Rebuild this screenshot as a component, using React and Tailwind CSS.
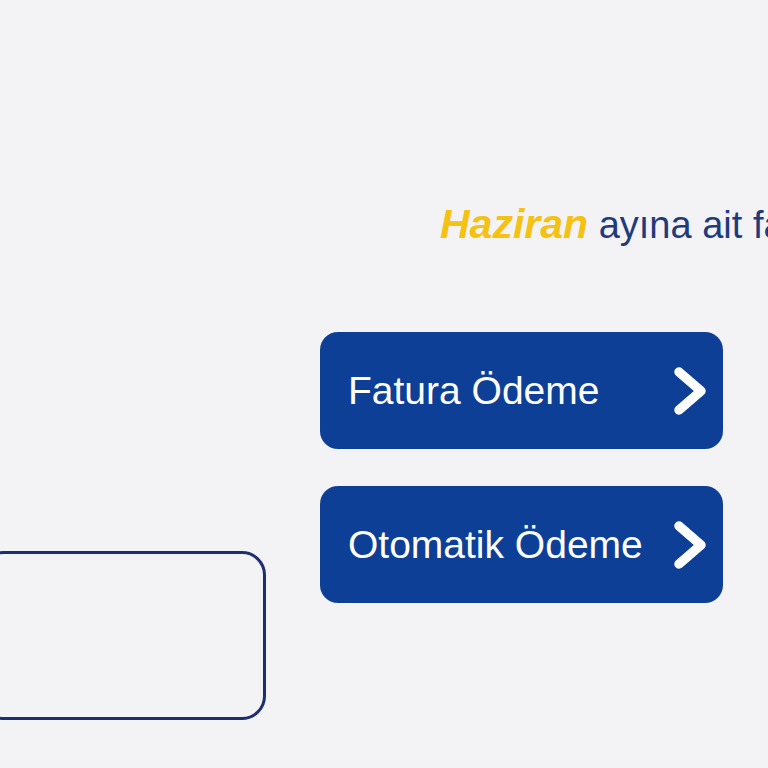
import React from "react";

const Chevron = () => (
  <svg width="44" height="52" viewBox="0 0 44 52" fill="none">
    <polyline
      points="12,7 34,26 12,45"
      stroke="white"
      strokeWidth="9.5"
      strokeLinecap="round"
      strokeLinejoin="round"
    />
  </svg>
);

const PayButton = ({ label }) => (
  <button className="w-[403px] h-[117px] rounded-[18px] bg-[#0e3f96] flex items-center justify-between pl-[28px] pr-[12px] text-white text-[39px] leading-none">
    <span>{label}</span>
    <Chevron />
  </button>
);

export default function App() {
  return (
    <div
      className="w-[768px] h-[768px] overflow-hidden bg-[#f3f3f5]"
      style={{ fontFamily: '"Liberation Sans", Arial, sans-serif' }}
    >
      <div className="pt-[204px] pl-[440px] whitespace-nowrap text-[38px] leading-[42px] text-[#1f3b7c]">
        <span className="font-bold italic text-[41px] leading-none text-[#f5c112]">Haziran</span> ayına ait faturanız
      </div>
      <div className="flex items-start mt-[86px]">
        <div className="-ml-[20px] w-[286px] h-[169px] mt-[219px] rounded-[24px] border-[3px] border-[#1d2f70] shrink-0" />
        <div className="ml-[54px] flex flex-col gap-[37px] shrink-0">
          <PayButton label="Fatura Ödeme" />
          <PayButton label="Otomatik Ödeme" />
        </div>
      </div>
    </div>
  );
}
